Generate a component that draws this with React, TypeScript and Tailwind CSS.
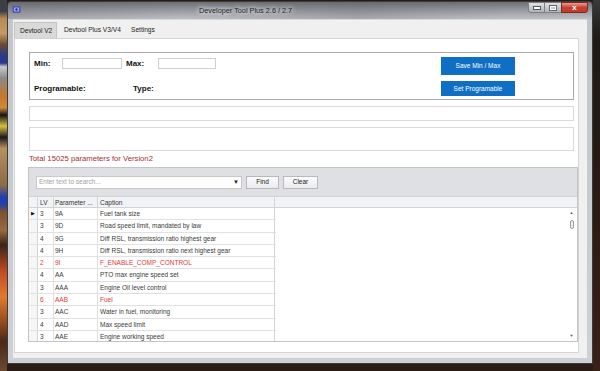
import React from "react";

type Row = { lv: string; p: string; c: string; red?: boolean };

const rows: Row[] = [
  { lv: "3", p: "9A", c: "Fuel tank size" },
  { lv: "3", p: "9D", c: "Road speed limit, mandated by law" },
  { lv: "4", p: "9G", c: "Diff RSL, transmission ratio highest gear" },
  { lv: "4", p: "9H", c: "Diff RSL, transmission ratio next highest gear" },
  { lv: "2", p: "9I", c: "F_ENABLE_COMP_CONTROL", red: true },
  { lv: "4", p: "AA", c: "PTO max engine speed set" },
  { lv: "3", p: "AAA", c: "Engine Oil level control" },
  { lv: "6", p: "AAB", c: "Fuel", red: true },
  { lv: "3", p: "AAC", c: "Water in fuel, monitoring" },
  { lv: "4", p: "AAD", c: "Max speed limit" },
  { lv: "3", p: "AAE", c: "Engine working speed" },
];

function AppIcon() {
  return (
    <svg width="9" height="9" viewBox="0 0 9 9">
      <rect x="0.5" y="1" width="8" height="7" rx="1.5" fill="#4a56b8" />
      <rect x="2" y="2.5" width="5" height="4" rx="1" fill="#9fb4f0" />
      <circle cx="4.5" cy="4.5" r="1.2" fill="#2a2f80" />
    </svg>
  );
}

export default function App() {
  return (
    <div className="w-[600px] h-[371px] overflow-hidden flex bg-[#2a1c15] font-['Liberation_Sans',Arial,sans-serif]">
      {/* desktop strip left */}
      <div className="w-[7px] h-full shrink-0 bg-[linear-gradient(to_bottom,#3b3f48_0%,#3b3f48_3%,#b88a55_5%,#c49a62_9%,#6b4a30_12%,#2a3a8a_15%,#2a3a8a_17%,#c9c9c9_18%,#8a8a8a_21%,#c8782e_26%,#d08a38_29%,#151515_31%,#d8c040_34%,#1a1a1a_37%,#b89060_40%,#8a6a48_50%,#2040b0_53%,#2040b0_55%,#7a5030_57%,#9a6a40_62%,#3a2418_66%,#c04a20_73%,#e07a30_80%,#a05020_86%,#4a2a18_92%,#6a4a30_100%)]" />
      {/* window */}
      <div className="w-[586px] h-[363px] mt-[1px] shrink-0 flex flex-col border border-[#3c3c3c] bg-[linear-gradient(to_bottom,#6c6f74_0%,#9a9da2_2.5%,#c2c5c9_5%,#cdd0d4_100%)] rounded-t-[4px]">
        {/* title bar */}
        <div className="h-[17px] flex items-start shrink-0 bg-[linear-gradient(to_right,rgba(90,90,95,0.25),rgba(255,255,255,0)_30%,rgba(80,80,85,0.2)_60%,rgba(255,255,255,0)_85%)]">
          <div className="ml-[4px] mt-[3px]">
            <AppIcon />
          </div>
          <div className="ml-[178px] h-[17px] leading-[17px] text-[7.3px] text-[#1e1e1e] [text-shadow:0_0_4px_#ffffff,0_0_6px_#ffffff]">
            Developer Tool Plus 2.6 / 2.7
          </div>
          <div className="flex-1" />
          <div className="flex mr-[4px]">
            <div className="w-[17px] h-[11px] rounded-bl-[3px] border border-[#7a7e86] bg-[linear-gradient(to_bottom,#dfe1e5,#aeb2b9)] flex items-end justify-center pb-[2px]">
              <div className="w-[6px] h-[2px] bg-white border border-[#555] box-content" />
            </div>
            <div className="w-[16px] h-[11px] border-y border-[#7a7e86] bg-[linear-gradient(to_bottom,#dfe1e5,#aeb2b9)] flex items-center justify-center">
              <div className="w-[6px] h-[4px] border border-white outline outline-1 outline-[#666]" />
            </div>
            <div className="w-[27px] h-[11px] rounded-br-[3px] border border-[#7a2a22] bg-[linear-gradient(to_bottom,#e8a092,#c8402f_50%,#c23a2a)] flex items-center justify-center">
              <span className="text-[8px] leading-[8px] font-bold text-white">x</span>
            </div>
          </div>
        </div>
        {/* client area */}
        <div className="flex-1 mx-[5px] mb-[5px] bg-[#f0f0f0] flex flex-col border-t border-[#d8d8d8]">
          {/* tabs */}
          <div className="h-[18px] flex items-end pl-[1px] shrink-0">
            <div className="w-[43px] h-[16px] bg-[#d9d9d9] border border-b-0 border-[#c4c4c4] pl-[5px] text-[6.6px] leading-[15px] text-[#222]">
              Devtool V2
            </div>
            <div className="w-[67px] h-[16px] pl-[7px] text-[6.6px] leading-[15px] text-[#222]">
              Devtool Plus V3/V4
            </div>
            <div className="w-[40px] h-[16px] pl-[7px] text-[6.6px] leading-[15px] text-[#222]">
              Settings
            </div>
          </div>
          {/* tab page */}
          <div className="ml-[1px] w-[565px] flex-1 mb-[5px] bg-white border border-[#d4d4d4] flex flex-col pt-[13px] pl-[14px]">
            {/* group box */}
            <div className="h-[48px] mr-[4px] border border-[#a9a9a9] flex shrink-0">
              <div className="flex flex-col pl-[4px]">
                <div className="h-[11px] mt-[5px] flex items-center">
                  <span className="w-[28px] text-[8px] font-bold text-[#111]">Min:</span>
                  <div className="w-[60px] h-[11px] border border-[#cfcfcf] bg-white" />
                  <span className="w-[36px] pl-[4px] text-[8px] font-bold text-[#111]">Max:</span>
                  <div className="w-[58px] h-[11px] border border-[#cfcfcf] bg-white" />
                </div>
                <div className="h-[11px] mt-[14px] flex items-center">
                  <span className="w-[99px] text-[8px] font-bold text-[#111]">Programable:</span>
                  <span className="text-[8px] font-bold text-[#111]">Type:</span>
                </div>
              </div>
              <div className="flex-1" />
              <div className="w-[74px] mr-[58px] flex flex-col">
                <div className="mt-[4px] h-[18px] bg-[#0f6fc4] flex items-center justify-center text-[6.5px] text-white">
                  Save Min / Max
                </div>
                <div className="mt-[6px] h-[15px] bg-[#0f6fc4] flex items-center justify-center text-[6.5px] text-white">
                  Set Programable
                </div>
              </div>
            </div>
            {/* textboxes */}
            <div className="mt-[6px] mr-[4px] h-[15px] border border-[#dadada] bg-white shrink-0" />
            <div className="mt-[6px] mr-[4px] h-[24px] border border-[#dadada] bg-white shrink-0" />
            <div className="mt-[3px] h-[10px] leading-[10px] text-[7.7px] text-[#a03232] shrink-0">
              Total 15025 parameters for Version2
            </div>
            {/* grid */}
            <div className="mt-[3px] ml-[-1px] h-[175px] border border-[#c4c4c4] flex flex-col shrink-0">
              <div className="h-[28px] bg-[#dfe0e4] flex items-center pl-[7px] shrink-0">
                <div className="w-[206px] h-[13px] bg-white border border-[#c9c9c9] flex items-center pl-[2px]">
                  <span className="text-[6.5px] text-[#a0a0a0] flex-1">Enter text to search...</span>
                  <span className="text-[6px] text-[#222] mr-[2px]">▼</span>
                </div>
                <div className="ml-[4px] w-[33px] h-[13px] border border-[#b9b9bd] bg-[linear-gradient(to_bottom,#fbfbfc,#ececef)] flex items-center justify-center text-[6.5px] text-[#222]">
                  Find
                </div>
                <div className="ml-[4px] w-[35px] h-[13px] border border-[#b9b9bd] bg-[linear-gradient(to_bottom,#fbfbfc,#ececef)] flex items-center justify-center text-[6.5px] text-[#222]">
                  Clear
                </div>
              </div>
              {/* header */}
              <div className="h-[12px] flex bg-[#f2f3f5] border-y border-[#d3d3d7] shrink-0 text-[6.5px] text-[#333] leading-[11px]">
                <div className="w-[9px] border-r border-[#d3d3d7]" />
                <div className="w-[16px] border-r border-[#d3d3d7] pl-[2px]">LV</div>
                <div className="w-[44px] border-r border-[#d3d3d7] pl-[1px] whitespace-nowrap overflow-hidden">Parameter ...</div>
                <div className="w-[177px] border-r border-[#d3d3d7] pl-[2px]">Caption</div>
                <div className="flex-1" />
              </div>
              {/* body */}
              <div className="flex-1 flex overflow-hidden bg-white">
                <div className="w-[247px] flex flex-col">
                  {rows.map((r, i) => (
                    <div
                      key={i}
                      className={`h-[12.3px] shrink-0 flex border-b border-[#e1e1e1] text-[6.5px] leading-[11px] ${r.red ? "text-[#e0383a]" : "text-[#3a3a3a]"}`}
                    >
                      <div className="w-[9px] border-r border-[#d3d3d7] bg-[#f6f6f6] flex items-center justify-center">
                        {i === 0 ? <span className="text-[5px] text-[#111]">▶</span> : null}
                      </div>
                      <div className="w-[16px] border-r border-[#e1e1e1] pl-[2px]">{r.lv}</div>
                      <div className="w-[44px] border-r border-[#e1e1e1] pl-[1px]">{r.p}</div>
                      <div className="w-[177px] border-r border-[#d3d3d7] pl-[2px] whitespace-nowrap overflow-hidden">{r.c}</div>
                    </div>
                  ))}
                </div>
                <div className="flex-1" />
                <div className="w-[9px] mr-[1px] flex flex-col items-center">
                  <span className="mt-[2px] text-[4px] leading-[5px] text-[#555]">▲</span>
                  <div className="mt-[5px] w-[4px] h-[9px] rounded-[2px] border border-[#9a9a9a] bg-[#f0f0f0]" />
                  <div className="flex-1" />
                  <span className="mb-[3px] text-[4px] leading-[5px] text-[#555]">▼</span>
                </div>
              </div>
            </div>
          </div>
        </div>
      </div>
      <div className="flex-1 h-full bg-[linear-gradient(to_bottom,#3a3a3a_0%,#1d1a18_10%,#2a1a12_50%,#3a2016_100%)]" />
    </div>
  );
}
